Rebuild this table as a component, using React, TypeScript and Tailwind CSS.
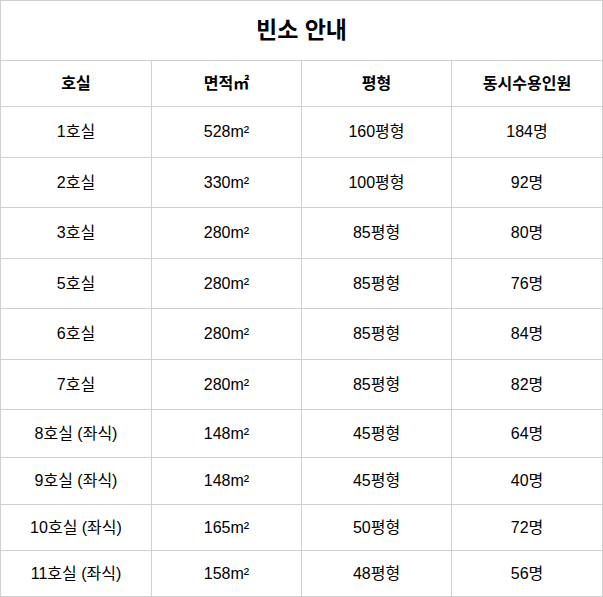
const rows = [
  { room: "1호실", area: "528m²", size: "160평형", cap: "184명", h: "h-[51px]" },
  { room: "2호실", area: "330m²", size: "100평형", cap: "92명", h: "h-[50px]" },
  { room: "3호실", area: "280m²", size: "85평형", cap: "80명", h: "h-[51px]" },
  { room: "5호실", area: "280m²", size: "85평형", cap: "76명", h: "h-[50px]" },
  { room: "6호실", area: "280m²", size: "85평형", cap: "84명", h: "h-[51px]" },
  { room: "7호실", area: "280m²", size: "85평형", cap: "82명", h: "h-[50px]" },
  { room: "8호실 (좌식)", area: "148m²", size: "45평형", cap: "64명", h: "h-[48px]" },
  { room: "9호실 (좌식)", area: "148m²", size: "45평형", cap: "40명", h: "h-[47px]" },
  { room: "10호실 (좌식)", area: "165m²", size: "50평형", cap: "72명", h: "h-[46px]" },
  { room: "11호실 (좌식)", area: "158m²", size: "48평형", cap: "56명", h: "h-[46px]" },
];

const cell = "border border-[#d0d0d0] p-0 text-center align-middle";

export default function App() {
  return (
    <div className="min-h-screen bg-white font-['Liberation_Sans','Noto_Sans_CJK_KR',sans-serif] text-black">
      <table className="w-[603px] table-fixed border-collapse">
        <colgroup>
          <col className="w-[151px]" />
          <col className="w-[150px]" />
          <col className="w-[150px]" />
          <col className="w-[151px]" />
        </colgroup>
        <thead>
          <tr className="h-[60px]">
            <th colSpan={4} className={`${cell} text-[23px] font-bold`}>
              빈소 안내
            </th>
          </tr>
          <tr className="h-[46px]">
            <th className={`${cell} text-[16px] font-bold`}>호실</th>
            <th className={`${cell} text-[16px] font-bold`}>면적㎡</th>
            <th className={`${cell} text-[16px] font-bold`}>평형</th>
            <th className={`${cell} text-[16px] font-bold`}>동시수용인원</th>
          </tr>
        </thead>
        <tbody className="text-[16px]">
          {rows.map((r) => (
            <tr key={r.room} className={r.h}>
              <td className={cell}>{r.room}</td>
              <td className={cell}>{r.area}</td>
              <td className={cell}>{r.size}</td>
              <td className={cell}>{r.cap}</td>
            </tr>
          ))}
        </tbody>
      </table>
    </div>
  );
}
